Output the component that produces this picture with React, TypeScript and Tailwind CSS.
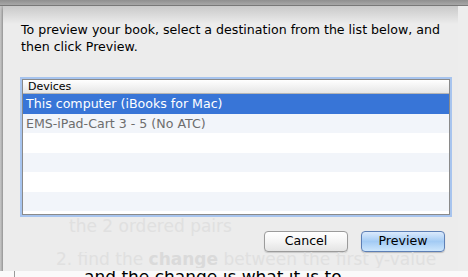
import React from "react";

const font = { fontFamily: '"DejaVu Sans", "Liberation Sans", sans-serif' };

export default function App() {
  const rows = [
    { text: "This computer (iBooks for Mac)", kind: "sel" },
    { text: "EMS-iPad-Cart 3 - 5 (No ATC)", kind: "alt" },
    { text: "", kind: "white" },
    { text: "", kind: "alt" },
    { text: "", kind: "white" },
    { text: "", kind: "alt" },
  ];
  return (
    <div className="w-[468px] h-[277px] overflow-hidden bg-[#f7f7f7] flex flex-col" style={font}>
      <div className="h-[6px] shrink-0 bg-gradient-to-b from-[#8f8f8f] to-[#a8a8a8] border-b border-[#7a7a7a]" />
      <div className="flex h-[265px] shrink-0">
        <div className="w-[3px] bg-gradient-to-r from-[#c8c8c8] to-[#b4b4b4]" />
        <div className="w-[455px] bg-[#ececec] shadow-[0_2px_3px_rgba(0,0,0,0.35)] flex flex-col">
          <div className="h-[18px] shrink-0 bg-gradient-to-b from-[#c9c9c9] to-[#ececec]" />
          <div className="flex flex-col pl-[18px] pr-[8px]">
            <p className="-mt-[3px] text-[12.6px] leading-[17px] text-black">
              To preview your book, select a destination from the list below, and then click Preview.
            </p>
            <div className="mt-[24px] ml-[1px] w-[428px] h-[136px] border border-[#8a8a8a] bg-white shadow-[0_0_0_2px_#a7c4ee] flex flex-col overflow-hidden">
              <div className="h-[14px] shrink-0 bg-gradient-to-b from-white to-[#e6e6e6] border-b border-[#b5b5b5] text-[11px] leading-[13px] text-black pl-[5px]">
                Devices
              </div>
              {rows.map((r, i) => (
                <div
                  key={i}
                  className={
                    "h-[19.5px] shrink-0 pl-[3px] text-[12.6px] leading-[19.5px] whitespace-nowrap " +
                    (r.kind === "sel"
                      ? "bg-[#3875d7] text-white"
                      : r.kind === "alt"
                      ? "bg-[#f2f5fa] text-[#6d6d6d]"
                      : "bg-white")
                  }
                >
                  {r.text}
                </div>
              ))}
            </div>
            <div className="flex mt-[4px] h-[14px]">
              <span className="ml-[48px] text-[17px] leading-[14px] text-[#e0e0e0] whitespace-nowrap">the 2 ordered pairs</span>
            </div>
            <div className="flex justify-end gap-[13px] -mt-[2px] pr-[5px]">
              <button className="w-[84px] h-[21px] rounded-[4px] border border-[#9b9b9b] bg-gradient-to-b from-white via-[#f4f4f4] to-[#e4e4e4] text-[12.6px] text-black shadow-[0_1px_1px_rgba(0,0,0,0.15)]">
                Cancel
              </button>
              <button className="w-[84px] h-[21px] rounded-[4px] border border-[#5d7fb5] bg-gradient-to-b from-[#dbeafc] via-[#a3cbf4] to-[#cde6fc] text-[12.6px] text-black shadow-[0_1px_1px_rgba(0,0,0,0.2)]">
                Preview
              </button>
            </div>
            <svg width="437" height="16" className="-ml-[18px]">
              <text x="53" y="13" fontSize="17" fill="#e0e0e0" fontFamily="DejaVu Sans">
                2. find the <tspan fontWeight="bold" fill="#dadada">change</tspan> between the first y-value
              </text>
            </svg>
          </div>
        </div>
        <div className="flex-1 bg-[#ededed]" />
      </div>
      <div className="h-[6px] shrink-0 bg-[#fafafa] flex">
        <div className="ml-[14px] w-px h-full bg-[#9a9a9a]" />
        <svg width="320" height="6" className="ml-[69px]">
          <text x="0" y="12" fontSize="17" fill="#000" fontFamily="DejaVu Sans">and the change is what it is to</text>
        </svg>
      </div>
    </div>
  );
}
